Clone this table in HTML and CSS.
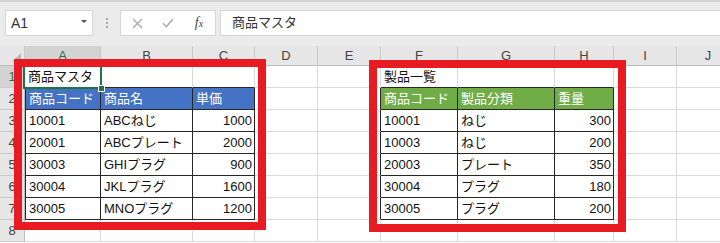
FILE: index.html
```html
<!DOCTYPE html>
<html lang="ja">
<head>
<meta charset="utf-8">
<link rel="stylesheet" href="styles.css">
</head>
<body>
<div class="toolbar">
  <div class="namebox"><span>A1</span><span class="caret"></span></div>
  <div class="sep"><i></i><i></i><i></i></div>
  <div class="fbtns">
    <span class="btn b1"><svg width="11" height="11" viewBox="0 0 11 11"><path d="M1 1 L10 10 M10 1 L1 10" stroke="#a9a9a9" stroke-width="1.3" fill="none"/></svg></span>
    <span class="btn b2"><svg width="12" height="10" viewBox="0 0 12 10"><path d="M1 5.2 L4.4 8.8 L11 1" stroke="#a9a9a9" stroke-width="1.4" fill="none"/></svg></span>
    <span class="btn b3 fx">f<small>x</small></span>
  </div>
  <div class="finput">商品マスタ</div>
</div>
<div class="sheet">
  <div class="grid">
    <div class="c ch corner"></div>
    <div class="c ch sel">A</div>
    <div class="c ch">B</div>
    <div class="c ch">C</div>
    <div class="c ch">D</div>
    <div class="c ch">E</div>
    <div class="c ch">F</div>
    <div class="c ch">G</div>
    <div class="c ch">H</div>
    <div class="c ch">I</div>
    <div class="c ch">J</div>

    <div class="c rh sel">1</div>
    <div class="c tt a1">商品マスタ</div>
    <div class="c tt"></div>
    <div class="c tt"></div>
    <div class="c"></div>
    <div class="c"></div>
    <div class="c tt">製品一覧</div>
    <div class="c tt"></div>
    <div class="c tt"></div>
    <div class="c"></div>
    <div class="c"></div>

    <div class="c rh">2</div>
    <div class="c tb tl hb">商品コード</div>
    <div class="c tb hb">商品名</div>
    <div class="c tb hb">単価</div>
    <div class="c"></div>
    <div class="c er"></div>
    <div class="c tb hg">商品コード</div>
    <div class="c tb hg">製品分類</div>
    <div class="c tb hg">重量</div>
    <div class="c"></div>
    <div class="c"></div>

    <div class="c rh">3</div>
    <div class="c tb tl">10001</div>
    <div class="c tb">ABCねじ</div>
    <div class="c tb num">1000</div>
    <div class="c"></div>
    <div class="c er"></div>
    <div class="c tb">10001</div>
    <div class="c tb">ねじ</div>
    <div class="c tb num">300</div>
    <div class="c"></div>
    <div class="c"></div>

    <div class="c rh">4</div>
    <div class="c tb tl">20001</div>
    <div class="c tb">ABCプレート</div>
    <div class="c tb num">2000</div>
    <div class="c"></div>
    <div class="c er"></div>
    <div class="c tb">10003</div>
    <div class="c tb">ねじ</div>
    <div class="c tb num">200</div>
    <div class="c"></div>
    <div class="c"></div>

    <div class="c rh">5</div>
    <div class="c tb tl">30003</div>
    <div class="c tb">GHIプラグ</div>
    <div class="c tb num">900</div>
    <div class="c"></div>
    <div class="c er"></div>
    <div class="c tb">20003</div>
    <div class="c tb">プレート</div>
    <div class="c tb num">350</div>
    <div class="c"></div>
    <div class="c"></div>

    <div class="c rh">6</div>
    <div class="c tb tl">30004</div>
    <div class="c tb">JKLプラグ</div>
    <div class="c tb num">1600</div>
    <div class="c"></div>
    <div class="c er"></div>
    <div class="c tb">30004</div>
    <div class="c tb">プラグ</div>
    <div class="c tb num">180</div>
    <div class="c"></div>
    <div class="c"></div>

    <div class="c rh">7</div>
    <div class="c tb tl">30005</div>
    <div class="c tb">MNOプラグ</div>
    <div class="c tb num">1200</div>
    <div class="c"></div>
    <div class="c er"></div>
    <div class="c tb">30005</div>
    <div class="c tb">プラグ</div>
    <div class="c tb num">200</div>
    <div class="c"></div>
    <div class="c"></div>

    <div class="c rh">8</div>
    <div class="c"></div>
    <div class="c"></div>
    <div class="c"></div>
    <div class="c"></div>
    <div class="c"></div>
    <div class="c"></div>
    <div class="c"></div>
    <div class="c"></div>
    <div class="c"></div>
    <div class="c"></div>
  </div>
  <div class="mark mark-left"></div>
  <div class="mark mark-right"></div>
</div>
</body>
</html>
```

FILE: styles.css
```css
html, body {
  margin: 0;
  padding: 0;
}
body {
  width: 720px;
  height: 243px;
  overflow: hidden;
  background: #fff;
  font-family: "Liberation Sans", "Noto Sans CJK JP", sans-serif;
}

/* ---------- toolbar ---------- */
.toolbar {
  height: 46px;
  box-sizing: border-box;
  background: #ebebeb;
  border-top: 2px solid #d3d3d3;
  display: flex;
  align-items: flex-start;
  padding: 8px 0 0 5px;
}
.namebox {
  width: 88px;
  height: 26px;
  box-sizing: border-box;
  background: #fff;
  border: 1px solid #d6d6d6;
  display: flex;
  align-items: center;
  justify-content: space-between;
  padding: 0 5px 0 5px;
  font-size: 14px;
  color: #333;
}
.caret {
  width: 0;
  height: 0;
  border-left: 3px solid transparent;
  border-right: 3px solid transparent;
  border-top: 3px solid #555;
  margin-top: -3px;
}
.sep {
  width: 27px;
  height: 26px;
  display: flex;
  flex-direction: column;
  align-items: center;
  justify-content: center;
  gap: 2px;
}
.sep i {
  display: block;
  width: 2px;
  height: 2px;
  background: #a8a8a8;
}
.fbtns {
  width: 96px;
  height: 26px;
  box-sizing: border-box;
  background: #fff;
  border: 1px solid #d6d6d6;
  display: flex;
  align-items: center;
}
.btn {
  display: flex;
  align-items: center;
  justify-content: center;
  height: 24px;
}
.b1 { width: 32px; }
.b2 { width: 30px; }
.b3 { width: 32px; }
.fx {
  font-family: "Liberation Serif", serif;
  font-style: italic;
  font-size: 14px;
  color: #444;
}
.fx small {
  font-size: 10px;
}
.finput {
  flex: 1;
  height: 26px;
  box-sizing: border-box;
  margin-left: 4px;
  background: #fff;
  border: 1px solid #d6d6d6;
  border-right: none;
  padding-left: 11px;
  font-size: 13px;
  line-height: 24px;
  color: #333;
}

/* ---------- sheet ---------- */
.sheet {
  position: relative;
}
.grid {
  display: grid;
  grid-template-columns: 25px 76px 92px 62px 63px 63px 77px 97px 59px 63px 63px;
  grid-template-rows: 20px repeat(8, 22px);
}
.c {
  box-sizing: border-box;
  border-right: 1px solid #dadada;
  border-bottom: 1px solid #dadada;
  font-size: 13px;
  line-height: 21px;
  padding: 0 3px;
  white-space: nowrap;
  overflow: hidden;
  color: #111;
}
.ch {
  background: #e6e6e6;
  border-right-color: #cacaca;
  border-bottom-color: #bdbdbd;
  text-align: center;
  color: #444;
  line-height: 19px;
  padding: 0;
}
.ch.sel {
  background: #d3d3d3;
  color: #217346;
}
.corner {
  position: relative;
}
.corner::after {
  content: "";
  position: absolute;
  right: 3px;
  bottom: 3px;
  width: 0;
  height: 0;
  border-left: 9px solid transparent;
  border-bottom: 9px solid #b5b5b5;
}
.rh {
  background: #e6e6e6;
  border-right-color: #bdbdbd;
  border-bottom-color: #cacaca;
  text-align: center;
  color: #444;
  padding: 0;
}
.rh.sel {
  background: #d3d3d3;
  color: #217346;
}
.num {
  text-align: right;
  padding-right: 2px;
}
.tb {
  border-right-color: #262626;
  border-bottom-color: #262626;
}
.tl {
  border-left: 1px solid #262626;
}
.tt {
  border-bottom-color: #262626;
}
.er {
  border-right-color: #262626;
}
.hb {
  background: #4472c4;
  color: #fff;
}
.hg {
  background: #70ad47;
  color: #fff;
}

/* selected cell A1 */
.a1 {
  position: relative;
  overflow: visible;
  z-index: 1;
}
.a1::after {
  content: "";
  position: absolute;
  left: -2px;
  top: -1px;
  right: -2px;
  bottom: -2px;
  border: 2px solid #217346;
}
.a1::before {
  content: "";
  position: absolute;
  right: -5px;
  bottom: -5px;
  width: 5px;
  height: 5px;
  background: #217346;
  border: 1px solid #fff;
  z-index: 2;
}

/* red annotation frames */
.mark {
  position: absolute;
  box-sizing: border-box;
  border: 8px solid #e81b23;
  z-index: 3;
}
.mark-left {
  left: 14px;
  top: 13px;
  width: 252px;
  height: 171px;
}
.mark-right {
  left: 369px;
  top: 14px;
  width: 257px;
  height: 172px;
}
```
